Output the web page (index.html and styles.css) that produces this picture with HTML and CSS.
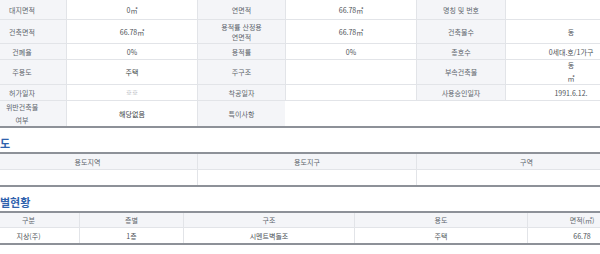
FILE: index.html
```html
<!DOCTYPE html>
<html lang="ko">
<head>
<meta charset="utf-8">
<link rel="stylesheet" href="styles.css">
</head>
<body>
<div class="page">
  <div class="info">
    <div class="c lab">대지면적</div>
    <div class="c val">0㎡</div>
    <div class="c lab">연면적</div>
    <div class="c val">66.78㎡</div>
    <div class="c lab">명칭 및 번호</div>
    <div class="c val"></div>

    <div class="c lab">건축면적</div>
    <div class="c val">66.78㎡</div>
    <div class="c lab tight">용적률 산정용<br>연면적</div>
    <div class="c val">66.78㎡</div>
    <div class="c lab">건축물수</div>
    <div class="c val">동</div>

    <div class="c lab">건폐율</div>
    <div class="c val">0%</div>
    <div class="c lab">용적률</div>
    <div class="c val">0%</div>
    <div class="c lab">총호수</div>
    <div class="c val">0세대.호/1가구</div>

    <div class="c lab">주용도</div>
    <div class="c val dark">주택</div>
    <div class="c lab">주구조</div>
    <div class="c val"></div>
    <div class="c lab">부속건축물</div>
    <div class="c val loose">동<br>㎡</div>

    <div class="c lab">허가일자</div>
    <div class="c val mute">※※</div>
    <div class="c lab">착공일자</div>
    <div class="c val"></div>
    <div class="c lab">사용승인일자</div>
    <div class="c val">1991.6.12.</div>

    <div class="c lab loose last">위반건축물<br>여부</div>
    <div class="c val dark last">해당없음</div>
    <div class="c lab last">특이사항</div>
    <div class="c val last span4"></div>
  </div>

  <h2 class="title">도</h2>
  <div class="zone">
    <div class="c head">용도지역</div>
    <div class="c head">용도지구</div>
    <div class="c head">구역</div>
    <div class="c val last"></div>
    <div class="c val last"></div>
    <div class="c val last"></div>
  </div>

  <h2 class="title">별현황</h2>
  <div class="floor">
    <div class="c head">구분</div>
    <div class="c head">층별</div>
    <div class="c head">구조</div>
    <div class="c head">용도</div>
    <div class="c head">면적(㎡)</div>
    <div class="c val last">지상(주)</div>
    <div class="c val last">1층</div>
    <div class="c val last">시멘트벽돌조</div>
    <div class="c val last">주택</div>
    <div class="c val last">66.78</div>
  </div>
</div>
</body>
</html>
```
FILE: styles.css
```css
html, body {
  margin: 0;
  padding: 0;
  background: #ffffff;
  overflow: hidden;
}
body {
  font-family: "Noto Sans CJK KR", "Noto Sans", sans-serif;
  font-size: 7px;
  color: #555a60;
}
.page {
  width: 658px;
  margin-left: -22px;
}
.info, .zone, .floor {
  display: grid;
  border-top: 2px solid #8d9198;
  border-bottom: 2px solid #8d9198;
}
.info {
  border-top: none;
  grid-template-columns: 88px 131px 88px 131px 89px 131px;
  grid-template-rows: 20px 24px 16px 25px 16px 25px;
}
.zone {
  grid-template-columns: 219px 219px 220px;
  grid-template-rows: 16px 15px;
}
.floor {
  grid-template-columns: 101px 104px 171px 173px 109px;
  grid-template-rows: 15px 15px;
}
.c {
  box-sizing: border-box;
  display: flex;
  align-items: center;
  justify-content: center;
  text-align: center;
  line-height: 10px;
  border-bottom: 1px solid #e2e4e8;
  border-left: 1px solid #e2e4e8;
  white-space: nowrap;
}
.info .c:nth-child(6n+1),
.zone .c:nth-child(3n+1),
.floor .c:nth-child(5n+1) {
  border-left: none;
}
.info .span4 {
  grid-column: span 4;
}
.lab, .head {
  background: #f4f5f8;
  color: #60656c;
}
.val {
  background: #ffffff;
  color: #4e5359;
}
.dark {
  color: #3a3e44;
}
.mute {
  color: #a9adb3;
  font-size: 6px;
}
.tight {
  line-height: 10px;
}
.loose {
  line-height: 13px;
}
.last {
  border-bottom: none;
}
.title {
  margin: 0;
  padding: 8px 0 2px 22px;
  height: 14px;
  font-size: 11px;
  line-height: 14px;
  font-weight: bold;
  color: #2f62ad;
}
```
